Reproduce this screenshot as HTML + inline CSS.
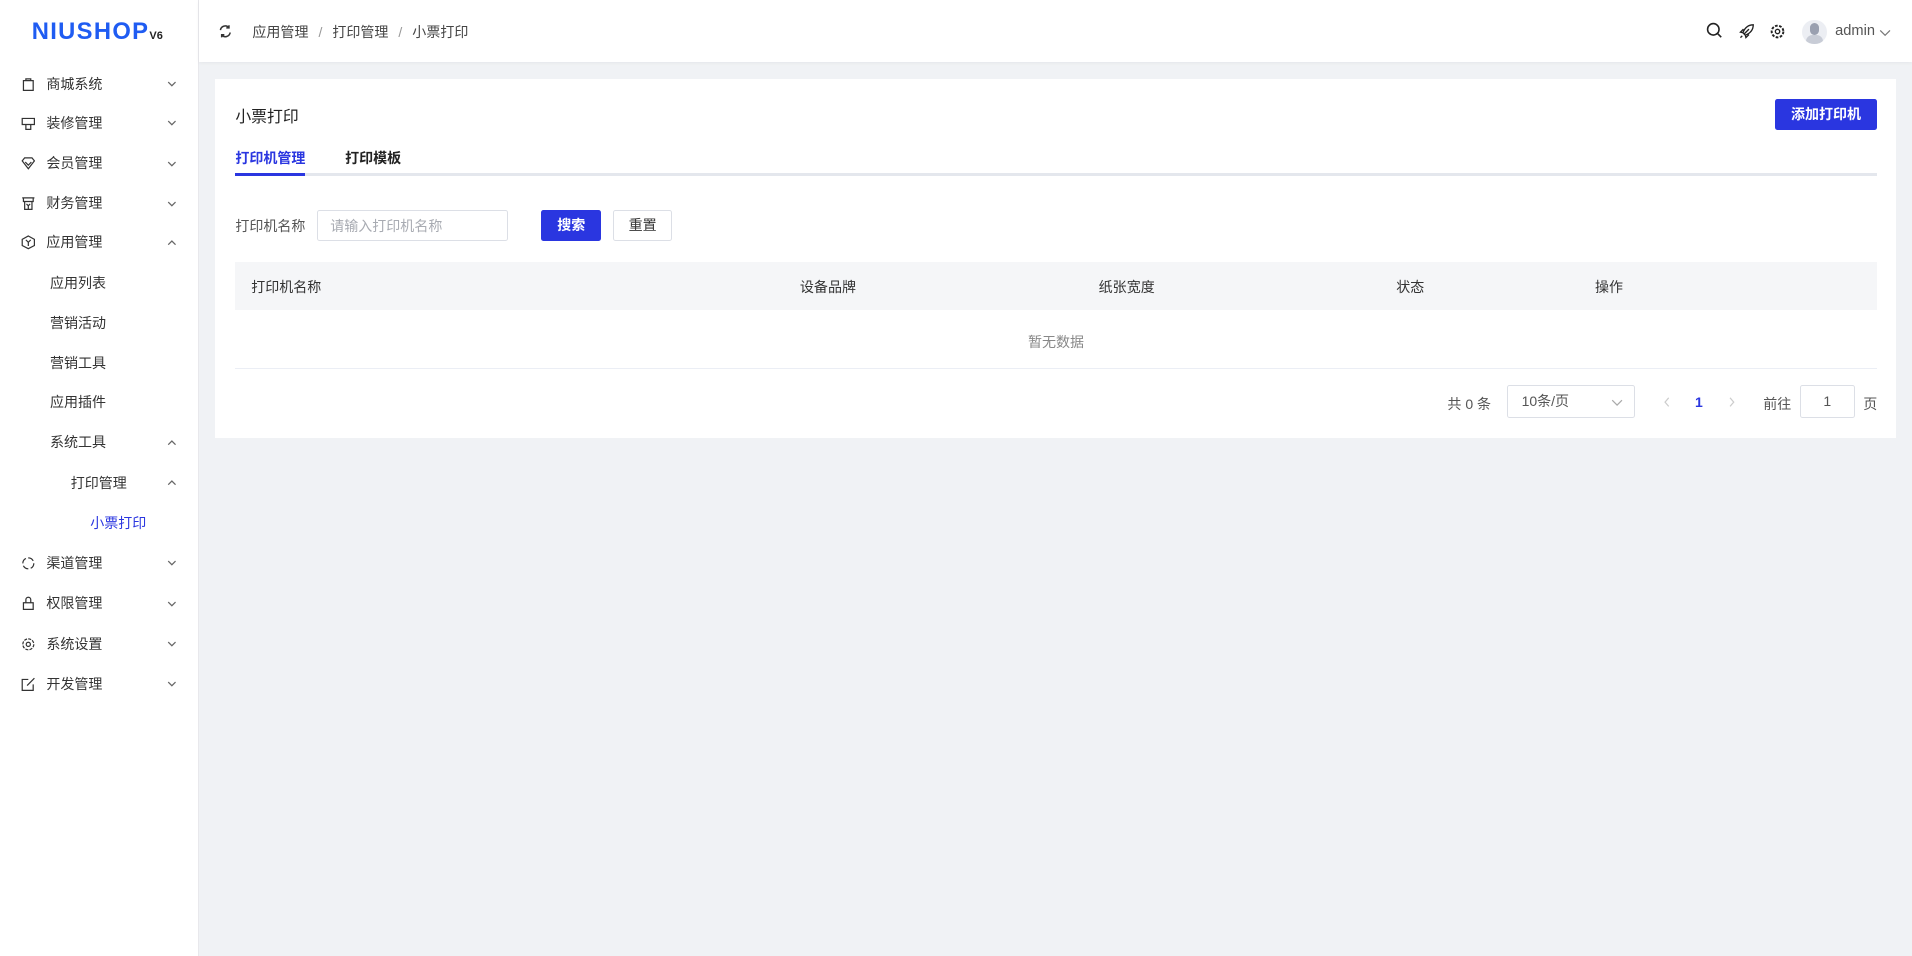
<!DOCTYPE html>
<html><head><meta charset="utf-8"><style>
html{zoom:1.21939}
*{box-sizing:border-box;margin:0;padding:0}
body{width:1568px;height:784px;overflow:hidden;background:#f0f2f5;font-family:"Liberation Sans","Noto Sans CJK SC",sans-serif;font-size:11.5px;color:#333;position:relative}
.abs{position:absolute}
#side{left:0;top:0;width:163px;height:784px;background:#fff;border-right:1px solid #e8e8ec}
.logo{left:26px;top:15px;font-size:19.5px;font-weight:bold;color:#1f5cf2;letter-spacing:1.1px;font-family:"Liberation Sans",sans-serif}
.logo small{font-size:9px;color:#222;margin-left:0;letter-spacing:0}
.mi{position:absolute;left:0;width:163px;height:20px;line-height:20px;color:#333}
.mi .ic{position:absolute;left:17px;top:4px;width:12px;height:12px}
.mi .t{position:absolute}
.mi .ar{position:absolute;left:137px;top:6px;width:8px;height:8px}
#head{left:163px;top:0;width:1405px;height:51px;background:#fff;box-shadow:0 1px 3px rgba(0,0,0,.05)}
.card{left:176px;top:65px;width:1379px;height:294px;background:#fff}
.btn{position:absolute;text-align:center;border-radius:2px}
</style></head><body>
<div id="side" class="abs">
<div class="abs logo">NIUSHOP<small>V6</small></div>
<svg width="0" height="0" style="position:absolute"><defs><path id="dn" d="M1 2.5l3 3 3-3" fill="none" stroke="#666" stroke-width="1"/><path id="up" d="M1 5.5l3-3 3 3" fill="none" stroke="#666" stroke-width="1"/></defs></svg>
<div class="mi" style="top:59px"><svg class="ic" viewBox="0 0 12 12"><path d="M2 3h8v8H2zM4 3V1.5h4V3" fill="none" stroke="#333"/></svg><span class="t" style="left:38px">商城系统</span><svg class="ar"><use href="#dn"/></svg></div>
<div class="mi" style="top:91px"><svg class="ic" viewBox="0 0 12 12"><path d="M1 2h10v5H1zM4 7v4h4V7" fill="none" stroke="#333"/></svg><span class="t" style="left:38px">装修管理</span><svg class="ar"><use href="#dn"/></svg></div>
<div class="mi" style="top:124px"><svg class="ic" viewBox="0 0 12 12"><path d="M1 4l2-2.5h6L11 4 6 10.5z M3.5 5L6 7.5 8.5 5" fill="none" stroke="#333"/></svg><span class="t" style="left:38px">会员管理</span><svg class="ar"><use href="#dn"/></svg></div>
<div class="mi" style="top:157px"><svg class="ic" viewBox="0 0 12 12"><path d="M1 1.5h10M2 1.5v3h8v-3M3 4.5v6.5h6V4.5M4.5 6.5l1.5 1.5 1.5-1.5M6 8v3" fill="none" stroke="#333"/></svg><span class="t" style="left:38px">财务管理</span><svg class="ar"><use href="#dn"/></svg></div>
<div class="mi" style="top:189px"><svg class="ic" viewBox="0 0 12 12"><path d="M6 .8l5 2.8v5L6 11.2 1 8.6v-5zM4 4l2 2 2-2M6 6v3" fill="none" stroke="#333"/></svg><span class="t" style="left:38px">应用管理</span><svg class="ar"><use href="#up"/></svg></div>
<div class="mi" style="top:222px"><span class="t" style="left:41px">应用列表</span></div>
<div class="mi" style="top:255px"><span class="t" style="left:41px">营销活动</span></div>
<div class="mi" style="top:288px"><span class="t" style="left:41px">营销工具</span></div>
<div class="mi" style="top:320px"><span class="t" style="left:41px">应用插件</span></div>
<div class="mi" style="top:353px"><span class="t" style="left:41px">系统工具</span><svg class="ar"><use href="#up"/></svg></div>
<div class="mi" style="top:386px"><span class="t" style="left:58px">打印管理</span><svg class="ar"><use href="#up"/></svg></div>
<div class="mi" style="top:419px"><span class="t" style="left:74px;color:#2a36e0">小票打印</span></div>
<div class="mi" style="top:452px"><svg class="ic" viewBox="0 0 12 12"><circle cx="6" cy="6" r="4.5" fill="none" stroke="#333" stroke-dasharray="5 2"/></svg><span class="t" style="left:38px">渠道管理</span><svg class="ar"><use href="#dn"/></svg></div>
<div class="mi" style="top:485px"><svg class="ic" viewBox="0 0 12 12"><path d="M2 5.5h8v5.5H2zM4 5.5V3a2 2 0 014 0v2.5" fill="none" stroke="#333"/></svg><span class="t" style="left:38px">权限管理</span><svg class="ar"><use href="#dn"/></svg></div>
<div class="mi" style="top:518px"><svg class="ic" viewBox="0 0 12 12"><circle cx="6" cy="6" r="4.5" fill="none" stroke="#333" stroke-dasharray="2.5 1"/><circle cx="6" cy="6" r="1.7" fill="none" stroke="#333"/></svg><span class="t" style="left:38px">系统设置</span><svg class="ar"><use href="#dn"/></svg></div>
<div class="mi" style="top:551px"><svg class="ic" viewBox="0 0 12 12"><path d="M10 6v5H1V2h5M5 7l6-6" fill="none" stroke="#333"/></svg><span class="t" style="left:38px">开发管理</span><svg class="ar"><use href="#dn"/></svg></div>
</div>
<div id="head" class="abs">
<svg class="abs" style="left:16px;top:20px" width="12" height="12" viewBox="0 0 12 12"><path d="M2 5a4 4 0 017-2M10 7a4 4 0 01-7 2M9 1v2.2H6.8M3 11V8.8h2.2" fill="none" stroke="#333" stroke-width="1.2"/></svg>
<div class="abs" style="left:44px;top:18px;color:#444">应用管理 <span style="color:#999;margin:0 5px">/</span> 打印管理 <span style="color:#999;margin:0 5px">/</span> 小票打印</div>
<svg class="abs" style="left:1236px;top:18px" width="14" height="14" viewBox="0 0 14 14"><circle cx="6" cy="6" r="4.7" fill="none" stroke="#222" stroke-width="1.3"/><path d="M9.5 9.5l3 3" stroke="#222" stroke-width="1.3"/></svg>
<svg class="abs" style="left:1262px;top:19px" width="14" height="14" viewBox="0 0 14 14"><path d="M5 9l4-4M4 8c2-5 5-6.5 8.5-6.5C12.5 5 11 8 6 10zM4 8L2 7.5 4.5 5M6 10l.5 2L9 9.5M3.5 10.5L2 12" fill="none" stroke="#222" stroke-width="1.1"/></svg>
<svg class="abs" style="left:1288px;top:19px" width="14" height="14" viewBox="0 0 14 14"><circle cx="7" cy="7" r="4.8" fill="none" stroke="#222" stroke-width="1.6" stroke-dasharray="2.2 1.2"/><circle cx="7" cy="7" r="1.8" fill="none" stroke="#222" stroke-width="1.1"/></svg>
<div class="abs" style="left:1315px;top:16px;width:20px;height:20px;border-radius:50%;background:#eceef3;overflow:hidden"><div style="position:absolute;left:6px;top:3px;width:8px;height:10px;border-radius:4px;background:#9aa0b0"></div><div style="position:absolute;left:3px;top:13px;width:14px;height:10px;border-radius:7px;background:#c8ccd6"></div></div>
<div class="abs" style="left:1342px;top:19px;font-size:12px;color:#555">admin</div>
<svg class="abs" style="left:1378px;top:23px" width="10" height="8"><path d="M1 2l4 4 4-4" fill="none" stroke="#777"/></svg>
</div>
<div class="abs card">
<div class="abs" style="left:17px;top:20px;font-size:13px;color:#222">小票打印</div>
<div class="btn" style="left:1280px;top:16px;width:83px;height:26px;line-height:26px;background:#2a36e0;color:#fff;font-weight:bold">添加打印机</div>
<div class="abs" style="left:17px;top:56px;font-weight:bold;color:#2a36e0">打印机管理</div>
<div class="abs" style="left:107px;top:56px;font-weight:bold;color:#222">打印模板</div>
<div class="abs" style="left:17px;top:77px;width:1346px;height:2px;background:#e4e7ed"></div>
<div class="abs" style="left:17px;top:77px;width:57px;height:2px;background:#2a36e0"></div>
<div class="abs" style="left:17px;top:112px;color:#555">打印机名称</div>
<div class="abs" style="left:84px;top:107px;width:157px;height:26px;border:1px solid #dcdfe6;border-radius:2px;color:#a8abb2;padding-left:10px;line-height:25px">请输入打印机名称</div>
<div class="btn" style="left:268px;top:107px;width:49px;height:26px;line-height:26px;background:#2a36e0;color:#fff;font-weight:bold">搜索</div>
<div class="btn" style="left:327px;top:107px;width:48px;height:26px;line-height:24px;border:1px solid #dcdfe6;color:#333">重置</div>
<div class="abs" style="left:17px;top:150px;width:1346px;height:39px;background:#f5f6f8"></div>
<div class="abs" style="left:30px;top:162px;color:#333">打印机名称</div>
<div class="abs" style="left:480px;top:162px;color:#333">设备品牌</div>
<div class="abs" style="left:725px;top:162px;color:#333">纸张宽度</div>
<div class="abs" style="left:969px;top:162px;color:#333">状态</div>
<div class="abs" style="left:1132px;top:162px;color:#333">操作</div>
<div class="abs" style="left:17px;top:207px;width:1346px;text-align:center;color:#888">暂无数据</div>
<div class="abs" style="left:17px;top:237px;width:1346px;height:1px;background:#ebeef5"></div>
<div class="abs" style="left:1011px;top:258px;color:#555">共 0 条</div>
<div class="abs" style="left:1060px;top:251px;width:105px;height:27px;border:1px solid #dcdfe6;border-radius:2px;padding-left:11px;line-height:26px;color:#555">10条/页<svg style="position:absolute;right:9px;top:10px" width="10" height="7"><path d="M1 1l4 4 4-4" fill="none" stroke="#aaa"/></svg></div>
<svg class="abs" style="left:1187px;top:260px" width="8" height="10"><path d="M5.5 1.5L2.5 5l3 3.5" fill="none" stroke="#ccc"/></svg>
<div class="abs" style="left:1214px;top:258px;color:#2a36e0;font-weight:bold">1</div>
<svg class="abs" style="left:1240px;top:260px" width="8" height="10"><path d="M2.5 1.5L5.5 5l-3 3.5" fill="none" stroke="#ccc"/></svg>
<div class="abs" style="left:1270px;top:258px;color:#555">前往</div>
<div class="abs" style="left:1300px;top:251px;width:45px;height:27px;border:1px solid #dcdfe6;border-radius:2px;text-align:center;line-height:26px;color:#555">1</div>
<div class="abs" style="left:1352px;top:258px;color:#555">页</div>
</div>
</body></html>
